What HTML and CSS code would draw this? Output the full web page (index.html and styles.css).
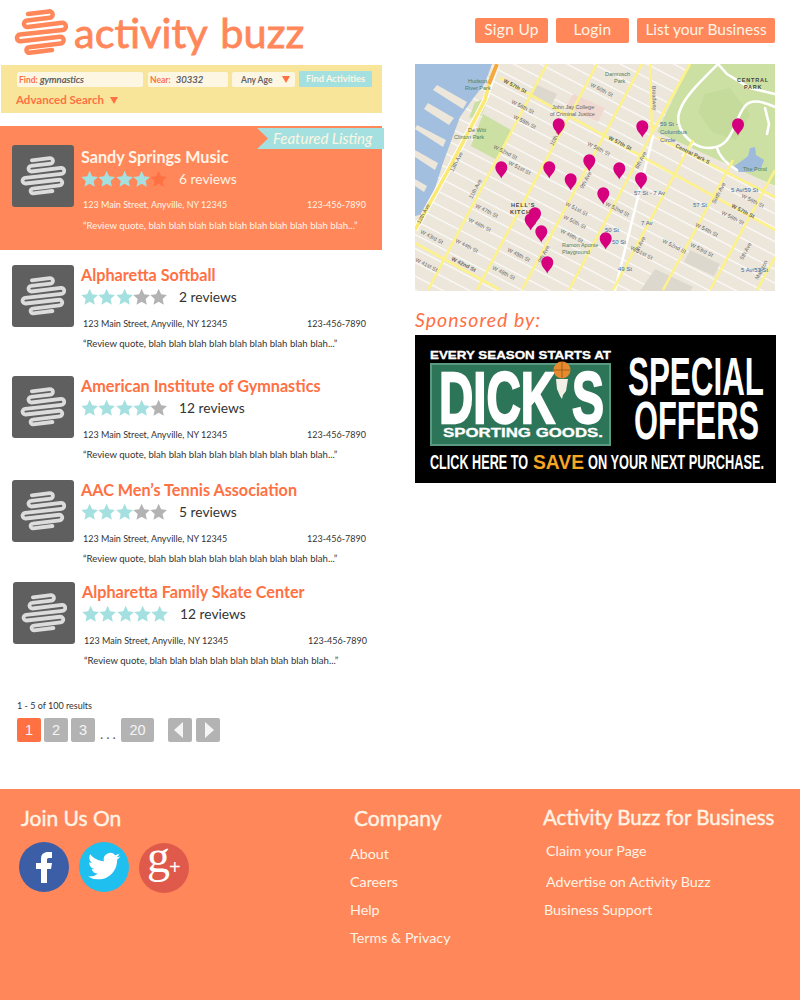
FILE: index.html
```html
<!DOCTYPE html>
<html lang="en">
<head>
<meta charset="utf-8">
<title>Activity Buzz</title>
<link rel="stylesheet" href="styles.css">
</head>
<body>
<svg class="defs" width="0" height="0" aria-hidden="true">
  <defs>
    <symbol id="buzz" viewBox="0 0 54 48">
      <path fill="none" stroke="currentColor" stroke-width="4.500" stroke-linecap="round" stroke-linejoin="round" d="M14 5 L35 2.400 a3.200 3.200 0 0 1 .8 6.400 L13 11.500 a3.300 3.300 0 0 0 .6 6.600 L48 13.800 a3.600 3.600 0 0 1 .6 7.200 L6 25.600 a3.300 3.300 0 0 0 .6 6.600 L46 27.800 a3.300 3.300 0 0 1 .6 6.600 L15 38.200 a2.800 2.800 0 0 0 .5 5.600 L38 41"/>
    </symbol>
    <symbol id="star" viewBox="0 0 20 20">
      <path fill="currentColor" d="M10 .6l2.900 6.200 6.700.8-5 4.600 1.400 6.700L10 15.500l-6 3.400 1.400-6.700-5-4.600 6.700-.8z"/>
    </symbol>
    <symbol id="pin" viewBox="0 0 14 18">
      <path fill="#d6007f" d="M7 17.500C5.500 13.500 1 11 1 6.200A6 6 0 0 1 13 6.200C13 11 8.500 13.500 7 17.500z"/>
    </symbol>
    <pattern id="streets" width="30" height="12.300" patternUnits="userSpaceOnUse" patternTransform="rotate(27.500) translate(0 3)">
      <rect y="0" width="30" height="1.200" fill="#fff" fill-opacity=".9"/>
    </pattern>
  </defs>
</svg>

<header class="top">
  <div class="brand">
    <svg class="brand-mark"><use href="#buzz"/></svg>
    <span class="brand-name">activity buzz</span>
  </div>
  <nav class="top-nav">
    <a class="top-btn top-btn-signup">Sign Up</a>
    <a class="top-btn top-btn-login">Login</a>
    <a class="top-btn top-btn-list">List your Business</a>
  </nav>
</header>

<main class="main">
  <section class="results">
    <form class="search">
      <div class="search-row">
        <div class="field field-find"><b>Find:</b> <i>gymnastics</i></div>
        <div class="field field-near"><b>Near:</b> <i>30332</i></div>
        <div class="field field-age"><span>Any Age</span><span class="tri"></span></div>
        <div class="find-btn">Find Activities</div>
      </div>
      <div class="advanced">Advanced Search <span class="tri tri-large"></span></div>
    </form>

    <article class="listing featured">
      <div class="ribbon">Featured Listing</div>
      <div class="thumb"><svg class="thumb-mark"><use href="#buzz"/></svg></div>
      <div class="body">
        <h2 class="title">Sandy Springs Music</h2>
        <div class="rating">
          <span class="stars">
            <svg class="star on"><use href="#star"/></svg><svg class="star on"><use href="#star"/></svg><svg class="star on"><use href="#star"/></svg><svg class="star on"><use href="#star"/></svg><svg class="star hot"><use href="#star"/></svg>
          </span>
          <span class="reviews">6 reviews</span>
        </div>
        <div class="contact"><span>123 Main Street, Anyville, NY 12345</span><span>123-456-7890</span></div>
        <p class="quote">“Review quote, blah blah blah blah blah blah blah blah blah blah...”</p>
      </div>
    </article>

    <article class="listing gap-25">
      <div class="thumb"><svg class="thumb-mark"><use href="#buzz"/></svg></div>
      <div class="body">
        <h2 class="title">Alpharetta Softball</h2>
        <div class="rating">
          <span class="stars">
            <svg class="star on"><use href="#star"/></svg><svg class="star on"><use href="#star"/></svg><svg class="star on"><use href="#star"/></svg><svg class="star"><use href="#star"/></svg><svg class="star"><use href="#star"/></svg>
          </span>
          <span class="reviews">2 reviews</span>
        </div>
        <div class="contact"><span>123 Main Street, Anyville, NY 12345</span><span>123-456-7890</span></div>
        <p class="quote">“Review quote, blah blah blah blah blah blah blah blah blah...”</p>
      </div>
    </article>

    <article class="listing gap-18">
      <div class="thumb"><svg class="thumb-mark"><use href="#buzz"/></svg></div>
      <div class="body">
        <h2 class="title">American Institute of Gymnastics</h2>
        <div class="rating">
          <span class="stars">
            <svg class="star on"><use href="#star"/></svg><svg class="star on"><use href="#star"/></svg><svg class="star on"><use href="#star"/></svg><svg class="star on"><use href="#star"/></svg><svg class="star"><use href="#star"/></svg>
          </span>
          <span class="reviews">12 reviews</span>
        </div>
        <div class="contact"><span>123 Main Street, Anyville, NY 12345</span><span>123-456-7890</span></div>
        <p class="quote">“Review quote, blah blah blah blah blah blah blah blah blah...”</p>
      </div>
    </article>

    <article class="listing gap-16">
      <div class="thumb"><svg class="thumb-mark"><use href="#buzz"/></svg></div>
      <div class="body">
        <h2 class="title">AAC Men’s Tennis Association</h2>
        <div class="rating">
          <span class="stars">
            <svg class="star on"><use href="#star"/></svg><svg class="star on"><use href="#star"/></svg><svg class="star on"><use href="#star"/></svg><svg class="star"><use href="#star"/></svg><svg class="star"><use href="#star"/></svg>
          </span>
          <span class="reviews">5 reviews</span>
        </div>
        <div class="contact"><span>123 Main Street, Anyville, NY 12345</span><span>123-456-7890</span></div>
        <p class="quote">“Review quote, blah blah blah blah blah blah blah blah blah...”</p>
      </div>
    </article>

    <article class="listing listing-shift">
      <div class="thumb"><svg class="thumb-mark"><use href="#buzz"/></svg></div>
      <div class="body">
        <h2 class="title">Alpharetta Family Skate Center</h2>
        <div class="rating">
          <span class="stars">
            <svg class="star on"><use href="#star"/></svg><svg class="star on"><use href="#star"/></svg><svg class="star on"><use href="#star"/></svg><svg class="star on"><use href="#star"/></svg><svg class="star on"><use href="#star"/></svg>
          </span>
          <span class="reviews">12 reviews</span>
        </div>
        <div class="contact"><span>123 Main Street, Anyville, NY 12345</span><span>123-456-7890</span></div>
        <p class="quote">“Review quote, blah blah blah blah blah blah blah blah blah...”</p>
      </div>
    </article>

    <div class="pager">
      <div class="pager-count">1 - 5 of 100 results</div>
      <div class="pager-row">
        <a class="page current">1</a>
        <a class="page">2</a>
        <a class="page">3</a>
        <span class="dots">...</span>
        <a class="page page-wide">20</a>
        <a class="page page-prev"><span class="arrow arrow-left"></span></a>
        <a class="page"><span class="arrow arrow-right"></span></a>
      </div>
    </div>
  </section>

  <aside class="side">
    <svg class="map" viewBox="0 0 360 227" role="img" aria-label="Map of Midtown Manhattan">
      <rect width="360" height="227" fill="#ece6db"/>
      <rect width="360" height="227" fill="url(#streets)"/>
      <path fill="#ddd8cd" d="M120 20l22 10-6 12-22-10zM240 205l38 18-3 4h-50zM275 186l30 14-6 12-30-14z"/>
      <path fill="#f0d9d0" d="M158 30l32 14-7 14-32-15z"/>
      <path fill="#cbe0a2" d="M275 0H360V122L242 68z"/>
      <path fill="#bdd596" d="M290 30l25 -6 20 26-14 26-24-8-14-20z" opacity=".5"/>
      <path fill="#cbe0a2" d="M60 38l14-4-8 18-12 2zM68 50l28 16-14 30-26-14z"/>
      <path fill="#a3bfe0" d="M0 0H77L70 19 57 36 45 53 28 99 12 149 0 152z"/>
      <path fill="#ece6db" d="M18 26l4-5 30 17-4 7zM9 45l4-6 26 15-5 7zM0 65l2-4 29 15-3 7zM0 93v-7l23 13-3 7zM0 122v-7l12 7-3 6z"/>
      <path fill="#9fbbdb" d="M335 84l5-1 1 8 8 5-3 8-8 4 -14 0 -5-6 9-6 5-4z"/>
      <g fill="none" stroke="#fff" stroke-width="2.600" stroke-linecap="round">
        <path d="M360 43C345 36 335 36 330 42 322 52 320 66 312 76 304 86 288 86 278 79 266 70 260 58 265 46 270 32 285 18 303 0"/>
        <path d="M302 84C304 92 312 100 322 106"/>
        <path d="M278 79L268 92"/>
        <path d="M238 72L200 226"/>
        <path d="M360 30L335 24 312 10 303 0"/>
        <path d="M350 44L354 60 352 70"/>
      </g>
      <g fill="none" stroke="#fdf28a" stroke-width="2.600">
        <path d="M13 226L132 0"/>
        <path d="M62 226L182 0"/>
        <path d="M107 226L227 0"/>
        <path d="M154 226L237 69 235 0"/>
        <path d="M198 226L278 76"/>
        <path d="M248 226L318 96"/>
        <path d="M295 226L360 106"/>
        <path d="M342 226L360 193"/>
        <path d="M237 69L275 0"/>
        <path d="M85 14L360 166"/>
        <path d="M242 73L360 133"/>
        <path d="M0 179L85 226"/>
      </g>
      <path fill="none" stroke="#fff" stroke-width="5.500" d="M0 166L35 103 70 36 82 0"/>
      <path fill="none" stroke="#fbe974" stroke-width="3.600" d="M0 166L35 103 70 36 74 20"/>
      <path fill="none" stroke="#f4a93c" stroke-width="4" d="M74 20L82 0"/>
      <g class="map-label">
        <text x="88" y="18" transform="rotate(27 88 18)" font-weight="700">W 57th St</text>
        <text x="96" y="39" transform="rotate(27 96 39)">W 56th St</text>
        <text x="98" y="54" transform="rotate(27 98 54)">W 55th St</text>
        <text x="78" y="84" transform="rotate(27 78 84)">W 52nd St</text>
        <text x="93" y="100" transform="rotate(27 93 100)">W 51st St</text>
        <text x="175" y="22" transform="rotate(27 175 22)">W 60th St</text>
        <text x="172" y="81" transform="rotate(27 172 81)">W 56th St</text>
        <text x="193" y="75" transform="rotate(27 193 75)" font-weight="700">W 57th St</text>
        <text x="260" y="83" transform="rotate(27 260 83)" font-weight="700">Central Park S</text>
        <text x="316" y="143" transform="rotate(27 316 143)" font-weight="700">W 57th St</text>
        <text x="326" y="133" transform="rotate(27 326 133)">W 56th St</text>
        <text x="306" y="150" transform="rotate(27 306 150)">W 56th St</text>
        <text x="280" y="162" transform="rotate(27 280 162)">W 54th St</text>
        <text x="275" y="182" transform="rotate(27 275 182)">W 53rd St</text>
        <text x="247" y="178" transform="rotate(27 247 178)">W 52nd St</text>
        <text x="215" y="185" transform="rotate(27 215 185)">W 51st St</text>
        <text x="150" y="141" transform="rotate(27 150 141)">W 51st St</text>
        <text x="190" y="141" transform="rotate(27 190 141)">W 52nd St</text>
        <text x="148" y="154" transform="rotate(27 148 154)">W 50th St</text>
        <text x="145" y="168" transform="rotate(27 145 168)">W 49th St</text>
        <text x="60" y="143" transform="rotate(27 60 143)">W 47th St</text>
        <text x="53" y="157" transform="rotate(27 53 157)">W 46th St</text>
        <text x="40" y="178" transform="rotate(27 40 178)">W 44th St</text>
        <text x="5" y="169" transform="rotate(27 5 169)">W 43rd St</text>
        <text x="92" y="187" transform="rotate(27 92 187)">W 45th St</text>
        <text x="0" y="197" transform="rotate(27 0 197)">W 41st St</text>
        <text x="36" y="196" transform="rotate(27 36 196)" font-weight="700">W 42nd St</text>
        <text x="77" y="205" transform="rotate(27 77 205)">W 48th St</text>
        <text x="38" y="108" transform="rotate(-62 38 108)">13th Ave</text>
        <text x="57" y="135" transform="rotate(-62 57 135)">11th Ave</text>
        <text x="138" y="82" transform="rotate(-62 138 82)">10th Ave</text>
        <text x="168" y="125" transform="rotate(-62 168 125)">9th Ave</text>
        <text x="126" y="199" transform="rotate(-62 126 199)">9th Ave</text>
        <text x="223" y="105" transform="rotate(-62 223 105)">8th Ave</text>
        <text x="222" y="190" transform="rotate(-62 222 190)">7th Ave</text>
        <text x="300" y="140" transform="rotate(-62 300 140)">Sixth Ave</text>
        <text x="328" y="196" transform="rotate(-62 328 196)">5th Ave</text>
        <text x="343" y="216" transform="rotate(-62 343 216)">Madison</text>
        <text x="237" y="22" transform="rotate(88 237 22)">Broadway</text>
        <text x="5" y="160" transform="rotate(-62 5 160)">12th Ave</text>
      </g>
      <g class="map-label map-label-park">
        <text x="53" y="19">Hudson</text>
        <text x="50" y="26">River Park</text>
        <text x="53" y="68">De Witt</text>
        <text x="39" y="75">Clinton Park</text>
        <text x="190" y="12">Damrosch</text>
        <text x="199" y="19">Park</text>
        <text x="137" y="45" class="label-dark">John Jay College</text>
        <text x="135" y="52" class="label-dark">of Criminal Justice</text>
        <text x="147" y="183">Ramon Aponte</text>
        <text x="147" y="190">Playground</text>
        <text x="328" y="107">The Pond</text>
      </g>
      <g class="map-label map-label-caps">
        <text x="322" y="18">CENTRAL</text>
        <text x="329" y="25">PARK</text>
        <text x="96" y="143">HELL'S</text>
        <text x="95" y="150">KITCHEN</text>
      </g>
      <g class="map-label map-label-transit">
        <text x="245" y="62">59 St -</text>
        <text x="245" y="70">Columbus</text>
        <text x="245" y="78">Circle</text>
        <text x="219" y="131">57 St - 7 Av</text>
        <text x="278" y="143">57 St</text>
        <text x="226" y="161">7 Av</text>
        <text x="190" y="168">50 St</text>
        <text x="197" y="180">50 St</text>
        <text x="203" y="207">49 St</text>
        <text x="316" y="128">5 Av/59 St</text>
        <text x="326" y="208">5 Av/53 St</text>
      </g>
      <g>
        <use href="#pin" x="136.700" y="54" width="14" height="18"/>
        <use href="#pin" x="220.300" y="56" width="14" height="18"/>
        <use href="#pin" x="316" y="54" width="14" height="18"/>
        <use href="#pin" x="79.300" y="97" width="14" height="18"/>
        <use href="#pin" x="127.300" y="97" width="14" height="18"/>
        <use href="#pin" x="167.300" y="90" width="14" height="18"/>
        <use href="#pin" x="197.300" y="98" width="14" height="18"/>
        <use href="#pin" x="219" y="108" width="14" height="18"/>
        <use href="#pin" x="148.700" y="109" width="14" height="18"/>
        <use href="#pin" x="181.300" y="123" width="14" height="18"/>
        <use href="#pin" x="113" y="143" width="14" height="18"/>
        <use href="#pin" x="108.700" y="149" width="14" height="18"/>
        <use href="#pin" x="119.300" y="161" width="14" height="18"/>
        <use href="#pin" x="183.700" y="168" width="14" height="18"/>
        <use href="#pin" x="125.300" y="192" width="14" height="18"/>
      </g>
    </svg>

    <div class="sponsored">Sponsored by:</div>

    <svg class="ad" viewBox="0 0 361 148" role="img" aria-label="Dick's Sporting Goods special offers">
      <rect width="361" height="148" fill="#000"/>
      <text class="ad-text ad-mid" x="15" y="24" font-size="11" textLength="181" lengthAdjust="spacingAndGlyphs">EVERY SEASON STARTS AT</text>
      <rect x="16" y="29" width="179" height="81" fill="#2d7558" stroke="#5a9a80" stroke-width="2"/>
      <text class="ad-text ad-heavy" transform="translate(24 88) scale(1 1.520)" font-size="47" textLength="116" lengthAdjust="spacingAndGlyphs">DICK</text>
      <text class="ad-text ad-heavy" transform="translate(157 88) scale(1 1.520)" font-size="47" textLength="32" lengthAdjust="spacingAndGlyphs">S</text>
      <path fill="#f4efe6" d="M141 44h12l-2 12-3 4-1 4-2-3-3-7z"/>
      <circle cx="147" cy="35" r="8.500" fill="#e58a2e"/>
      <path d="M139 35h16M147 27v16" stroke="#8a4a10" stroke-width=".7" fill="none"/>
      <text class="ad-text ad-mid" x="28" y="102" font-size="12" textLength="160" lengthAdjust="spacingAndGlyphs">SPORTING GOODS.</text>
      <text class="ad-text" transform="translate(213 60) scale(1 1.760)" font-size="31" textLength="136" lengthAdjust="spacingAndGlyphs">SPECIAL</text>
      <text class="ad-text" transform="translate(219 104) scale(1 1.760)" font-size="31" textLength="125" lengthAdjust="spacingAndGlyphs">OFFERS</text>
      <text class="ad-text" transform="translate(15 134) scale(1 1.750)" font-size="12" textLength="98" lengthAdjust="spacingAndGlyphs">CLICK HERE TO</text>
      <text class="ad-text ad-save" transform="translate(118 134) scale(1 1.400)" font-size="15" textLength="51" lengthAdjust="spacingAndGlyphs">SAVE</text>
      <text class="ad-text" transform="translate(173 134) scale(1 1.750)" font-size="12" textLength="176" lengthAdjust="spacingAndGlyphs">ON YOUR NEXT PURCHASE.</text>
    </svg>
  </aside>
</main>

<footer class="footer">
  <div class="foot-col foot-join">
    <h3 class="foot-head foot-head-join">Join Us On</h3>
    <div class="social">
      <svg class="social-icon" viewBox="0 0 50 51" role="img" aria-label="Facebook">
        <circle cx="25" cy="25" r="25" fill="#3b5ea6"/>
        <path fill="#fff" d="M22 41V27H17V21H22V17C22 12 25 10 29 10H33V16H30C28 16 28 17 28 18V21H33L32 27H28V41Z"/>
      </svg>
      <svg class="social-icon" viewBox="0 0 50 51" role="img" aria-label="Twitter">
        <circle cx="25" cy="25" r="25" fill="#1fbff0"/>
        <g transform="translate(9 8) scale(1.350)">
          <path fill="#fff" d="M23.953 4.570a10 10 0 01-2.825.775 4.958 4.958 0 002.163-2.723c-.951.555-2.005.959-3.127 1.184a4.920 4.920 0 00-8.384 4.482C7.690 8.095 4.067 6.130 1.640 3.162a4.822 4.822 0 00-.666 2.475c0 1.710.870 3.213 2.188 4.096a4.904 4.904 0 01-2.228-.616v.060a4.923 4.923 0 003.946 4.827 4.996 4.996 0 01-2.212.085 4.936 4.936 0 004.604 3.417 9.867 9.867 0 01-6.102 2.105c-.390 0-.779-.023-1.170-.067a13.995 13.995 0 007.557 2.209c9.053 0 13.998-7.496 13.998-13.985 0-.210 0-.420-.015-.630A9.935 9.935 0 0024 4.590z"/>
        </g>
      </svg>
      <svg class="social-icon" viewBox="0 0 50 51" role="img" aria-label="Google Plus">
        <circle cx="25" cy="26" r="25" fill="#e05a4b"/>
        <text class="gplus-g" x="8" y="30" font-size="46">g</text>
        <text class="gplus-plus" x="30" y="32" font-size="20">+</text>
      </svg>
    </div>
  </div>
  <div class="foot-col foot-company">
    <h3 class="foot-head foot-head-company">Company</h3>
    <ul class="foot-links">
      <li>About</li>
      <li>Careers</li>
      <li>Help</li>
      <li>Terms &amp; Privacy</li>
    </ul>
  </div>
  <div class="foot-col foot-biz">
    <h3 class="foot-head foot-head-biz">Activity Buzz for Business</h3>
    <ul class="foot-links foot-links-biz">
      <li class="biz-indent biz-first">Claim your Page</li>
      <li class="biz-indent biz-second">Advertise on Activity Buzz</li>
      <li class="biz-third">Business Support</li>
    </ul>
  </div>
</footer>
</body>
</html>
```

FILE: styles.css
```css
* { box-sizing: border-box; }

html, body { margin: 0; padding: 0; }

body {
  width: 800px;
  height: 1000px;
  overflow: hidden;
  background: #fff;
  color: #333;
  font-family: Lato, "Liberation Sans", sans-serif;
}

.defs { display: block; height: 0; }

/* Header */
.top {
  display: flex;
  justify-content: space-between;
  height: 64px;
  padding: 9px 25px 0 14px;
}

.brand { display: flex; align-items: flex-start; }

.brand-mark {
  width: 54px;
  height: 48px;
  margin-right: 6px;
  color: #ff875a;
}

.brand-name {
  color: #ff875a;
  font-size: 41.500px;
  line-height: 47px;
  font-weight: 400;
  word-spacing: 3px;
  -webkit-text-stroke: .8px #ff875a;
}

.top-nav { display: flex; gap: 8px; padding-top: 9px; }

.top-btn {
  display: block;
  height: 25px;
  border-radius: 2px;
  background: #ff875a;
  color: #fff4e6;
  font-size: 15.500px;
  line-height: 22px;
  text-align: center;
}

.top-btn-signup, .top-btn-login { width: 73px; letter-spacing: .3px; }
.top-btn-list { width: 138px; }

/* Main */
.main { display: flex; align-items: flex-start; height: 725px; }

.results { width: 382px; padding-top: 1px; }

.side { width: 361px; margin-left: 33px; }

/* Search */
.search {
  height: 48px;
  margin-left: 1px;
  padding: 6px 0 0 16px;
  background: #f8e59a;
}

.search-row { display: flex; align-items: flex-start; }

.field {
  height: 15px;
  margin-top: 1px;
  padding-left: 2px;
  border-radius: 2px;
  background: #fdf6e3;
  color: #666;
  font-size: 8.500px;
  line-height: 16px;
}

.field b { color: #ff7043; }
.field i { color: #555; font-size: 9.500px; font-weight: 400; -webkit-text-stroke: .2px #555; }

.field-find { width: 126px; margin-right: 5px; }
.field-near { width: 80px; margin-right: 4px; }
.field-near i { margin-left: 3px; }

.field-age {
  display: flex;
  justify-content: space-between;
  align-items: center;
  width: 63px;
  margin-right: 4px;
  padding: 0 5px 0 9px;
  font-weight: 700;
}

.find-btn {
  width: 73px;
  height: 16px;
  border-radius: 1px;
  background: #a4e0e0;
  color: #fdf6e3;
  font-size: 9.300px;
  font-weight: 700;
  line-height: 16px;
  text-align: center;
}

.tri {
  display: inline-block;
  width: 0;
  height: 0;
  border-left: 4px solid transparent;
  border-right: 4px solid transparent;
  border-top: 7px solid #ff7043;
}

.tri-large { margin-left: 3px; }

.advanced {
  margin-top: 5px;
  margin-left: -1px;
  color: #ff7043;
  font-size: 11.500px;
  font-weight: 700;
  line-height: 15px;
}

/* Listings */
.listing {
  display: flex;
  position: relative;
  padding-left: 12px;
  margin-top: 16px;
}

.listing-shift { padding-left: 13px; margin-top: 16px; }
.gap-25 { margin-top: 15px; }
.gap-18 { margin-top: 25px; }
.gap-16 { margin-top: 18px; }

.featured {
  height: 124px;
  margin-top: 13px;
  padding-top: 19px;
  background: #ff875a;
  color: #fff4e6;
}

.ribbon {
  position: absolute;
  top: 2px;
  left: 257px;
  width: 127px;
  height: 21px;
  padding-left: 16px;
  background: #a4e0e0;
  clip-path: polygon(0 0, 100% 0, 100% 100%, 0 100%, 11px 50%);
  color: #fdf6e3;
  font-size: 15px;
  font-style: italic;
  font-weight: 400;
  line-height: 21px;
  white-space: nowrap;
}

.thumb {
  display: flex;
  flex: none;
  align-items: center;
  justify-content: center;
  width: 62px;
  height: 62px;
  border-radius: 3px;
  background: #5f5f5f;
}

.thumb-mark { width: 46px; height: 41px; color: #dcdcdc; }

.body { width: 285px; margin-left: 7px; }

.featured .body { padding-top: 2px; }

.title {
  margin: 0;
  color: #ff7043;
  font-size: 16.200px;
  font-weight: 700;
  line-height: 20px;
  white-space: nowrap;
}

.featured .title { color: #fff4e6; }

.rating {
  display: flex;
  align-items: center;
  height: 22px;
  margin-top: 1px;
}

.stars { display: flex; width: 98px; }

.star { width: 17.300px; height: 18px; color: #b3b3b3; }
.star.on { color: #a4e0e0; }
.star.hot { color: #ff7043; }

.reviews { font-size: 13.800px; line-height: 20px; }

.contact {
  display: flex;
  justify-content: space-between;
  height: 14px;
  margin-top: 9px;
  padding-left: 2px;
  font-size: 9px;
  line-height: 14px;
}

.quote {
  margin: 6px 0 0 2px;
  font-size: 9.600px;
  line-height: 14px;
  white-space: nowrap;
}

.featured .contact { margin-top: 8px; }
.featured .quote { margin-top: 7px; }

/* Pager */
.pager { margin-top: 32px; padding-left: 17px; }

.pager-count { font-size: 9px; line-height: 12px; }

.pager-row { display: flex; margin-top: 6px; }

.page {
  display: flex;
  align-items: center;
  justify-content: center;
  width: 24px;
  height: 24px;
  margin-right: 3px;
  border-radius: 2px;
  background: #b3b3b3;
  color: #f5f5f5;
  font-family: "Liberation Sans", sans-serif;
  font-size: 14.500px;
}

.page.current { background: #ff7043; }
.page-wide { width: 33px; margin-right: 14px; }

.dots {
  width: 26px;
  margin-left: -1px;
  margin-right: -2px;
  padding-top: 6px;
  padding-left: 3px;
  color: #666;
  font-size: 14px;
  letter-spacing: 3px;
  line-height: 19px;
}

.arrow {
  width: 0;
  height: 0;
  border-top: 8px solid transparent;
  border-bottom: 8px solid transparent;
}

.arrow-left { border-right: 9px solid #f5f5f5; margin-right: 3px; }
.arrow-right { border-left: 9px solid #f5f5f5; margin-left: 3px; }

.page-prev { margin-right: 4px; }

/* Map and ad */
.map { display: block; width: 360px; height: 227px; }

.map-label text {
  fill: #666;
  font-family: "Liberation Sans", sans-serif;
  font-size: 5.500px;
}

.map-label-park text { fill: #4d7f5d; }
.map-label-park .label-dark { fill: #666; }
.map-label-caps text { fill: #444; font-weight: 700; letter-spacing: .8px; }
.map-label-transit text { fill: #3a6ea8; font-size: 6px; }

.sponsored {
  height: 43px;
  padding-top: 16px;
  color: #ff7043;
  font-size: 19.500px;
  font-style: italic;
  letter-spacing: 1px;
  line-height: 26px;
}

.ad { display: block; width: 361px; height: 148px; margin-top: 1px; }

.ad-text {
  fill: #fff;
  font-family: "Liberation Sans", sans-serif;
  font-weight: 700;
}

.ad-mid { stroke: #fff; stroke-width: .3px; }
.ad-heavy { stroke: #fff; stroke-width: 1.500px; }
.ad-save { fill: #f5a623; }

/* Footer */
.footer {
  display: flex;
  height: 211px;
  padding: 17px 0 0 19px;
  background: #ff875a;
  color: #fff4e6;
}

.foot-join { width: 332px; }
.foot-company { width: 192px; }

.foot-head {
  margin: 0;
  font-size: 21px;
  font-weight: 400;
  line-height: 24px;
  white-space: nowrap;
  -webkit-text-stroke: .4px #fff4e6;
}

.foot-head-join { margin-left: 2px; }
.foot-head-company { margin-left: 3px; }
.foot-head-biz { margin-top: -1px; font-size: 20.500px; }

.social { display: flex; gap: 10px; margin-top: 12px; }

.social-icon { width: 50px; height: 51px; }

.gplus-g { fill: #fff; font-family: "Liberation Serif", serif; }
.gplus-plus { fill: #fff; font-family: "Liberation Sans", sans-serif; }

.foot-links {
  margin: 10px 0 0 -1px;
  padding: 0;
  list-style: none;
  font-size: 14.300px;
  line-height: 28px;
}

.foot-links-biz { margin: 8px 0 0; }
.biz-indent { padding-left: 3px; }
.biz-first { height: 28px; }
.biz-second { height: 31px; padding-top: 3px; }
.biz-third { height: 28px; margin-left: 1px; }
```
